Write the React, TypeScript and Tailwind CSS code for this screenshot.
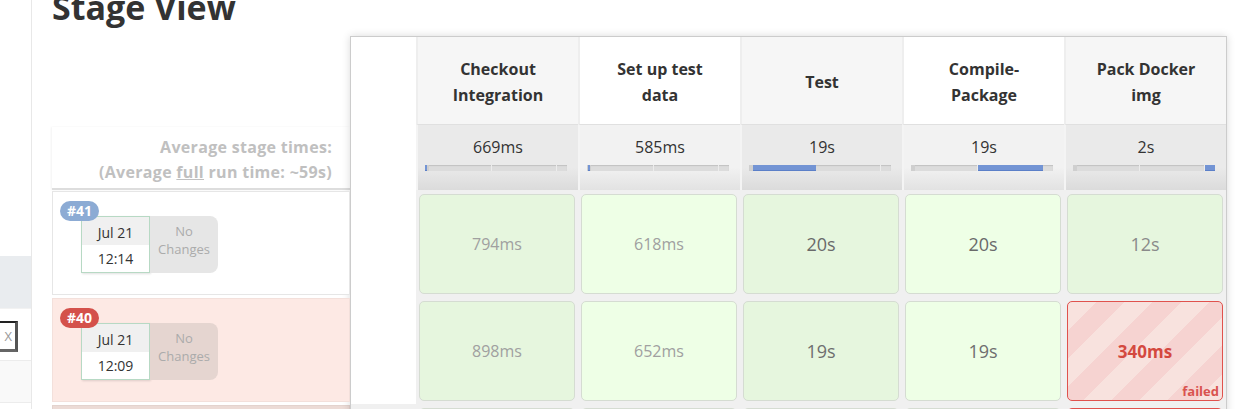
import React from "react";

type Stage = {
  name: string[];
  avg: string;
  blue: [number, number];
  odd: boolean;
};

const stages: Stage[] = [
  { name: ["Checkout", "Integration"], avg: "669ms", blue: [0, 2], odd: true },
  { name: ["Set up test", "data"], avg: "585ms", blue: [1, 3], odd: false },
  { name: ["Test"], avg: "19s", blue: [4, 67], odd: true },
  { name: ["Compile-", "Package"], avg: "19s", blue: [67, 132], odd: false },
  { name: ["Pack Docker", "img"], avg: "2s", blue: [132, 142], odd: true },
];

type Cell = { text: string; big: boolean; color: string; failed?: boolean };

const runs: Cell[][] = [
  [
    { text: "794ms", big: false, color: "text-[#a0a0a0]" },
    { text: "618ms", big: false, color: "text-[#a0a0a0]" },
    { text: "20s", big: true, color: "text-[#6a6a6a]" },
    { text: "20s", big: true, color: "text-[#6a6a6a]" },
    { text: "12s", big: true, color: "text-[#8a8a8a]" },
  ],
  [
    { text: "898ms", big: false, color: "text-[#a0a0a0]" },
    { text: "652ms", big: false, color: "text-[#a0a0a0]" },
    { text: "19s", big: true, color: "text-[#6e6e6e]" },
    { text: "19s", big: true, color: "text-[#6e6e6e]" },
    { text: "340ms", big: false, color: "", failed: true },
  ],
  [
    { text: "", big: false, color: "" },
    { text: "", big: false, color: "" },
    { text: "", big: false, color: "" },
    { text: "", big: false, color: "" },
    { text: "", big: false, color: "", failed: true },
  ],
];

function Sidebar() {
  return (
    <div className="w-[32px] shrink-0 border-r border-[#e8e8e8] flex flex-col">
      <div className="h-[256px]" />
      <div className="h-[52px] bg-[#e9ecef]" />
      <div className="h-[13px] border-t border-[#f2f2f2]" />
      <div className="h-[31px] w-[18px] border-t-2 border-r-[3px] border-b-[3px] border-t-[#222] border-r-[#555] border-b-[#666] bg-white flex items-center justify-end pr-[3px] text-[13px] text-[#9a9a9a] leading-none">
        X
      </div>
      <div className="h-[8px]" />
      <div className="h-[43px] bg-[#f9f9f9] border-y border-[#ececec]" />
    </div>
  );
}

function BuildRow({
  num,
  badge,
  box,
  changes,
  date,
  time,
}: {
  num: string;
  badge: string;
  box: string;
  changes: string;
  date: string;
  time: string;
}) {
  return (
    <div className="h-[107px] pt-[1px] pb-[2px]">
      <div className={"h-full border relative " + box}>
        <div
          className={
            "absolute left-[7px] top-[9px] z-10 w-[39px] h-[20px] rounded-full text-white font-bold text-[14px] leading-[20px] text-center " +
            badge
          }
        >
          {num}
        </div>
        <div className="flex ml-[28px] mt-[24px]">
          <div className="w-[69px] h-[57px] border border-[#b7d9c4] shadow-[1px_1px_2px_rgba(0,0,0,0.12)] flex flex-col text-[14px] text-[#333]">
            <div className="h-[28px] bg-[#f0f0f0] flex items-center justify-center pt-[2px]">
              {date}
            </div>
            <div className="flex-1 bg-white flex items-center justify-center">
              {time}
            </div>
          </div>
          <div
            className={
              "w-[68px] h-[57px] rounded-r-[8px] text-[#ababab] text-[13px] leading-[18px] flex flex-col items-center pt-[6px] " +
              changes
            }
          >
            <div>No</div>
            <div>Changes</div>
          </div>
        </div>
      </div>
    </div>
  );
}

function Bar({ blue }: { blue: [number, number] }) {
  return (
    <div className="ml-[7px] mt-[7px] w-[142px] h-[6px] bg-[#dcdcdc] relative shadow-[inset_0_1px_1px_rgba(0,0,0,0.12)]">
      <div className="absolute left-0 top-0 h-full w-[4px] bg-[#cfcfcf]" />
      <div className="absolute left-[66px] top-0 h-full w-[1px] bg-[#ececec]" />
      <div className="absolute left-[131px] top-0 h-full w-[1px] bg-[#ececec]" />
      <div
        className="absolute top-0 h-full bg-[#7394d4] border-b border-[#5b7fc8]"
        style={{ left: blue[0], width: Math.max(blue[1] - blue[0], 2) }}
      />
    </div>
  );
}

function StageCell({ cell, odd }: { cell: Cell; odd: boolean }) {
  if (cell.failed) {
    return (
      <div className="bg-[#f0f0f0] pt-[4px] pb-[3px] px-[3px]">
        <div className="h-full rounded-[5px] border border-[#e0524d] relative flex items-center justify-center bg-[repeating-linear-gradient(135deg,#f8e2de_0px,#f8e2de_20px,#f6d3d1_20px,#f6d3d1_40px)]">
          {cell.text && (
            <span className="font-bold text-[17px] text-[#d4493f] mt-[1px]">{cell.text}</span>
          )}
          {cell.text && (
            <span className="absolute right-[3px] bottom-[1px] text-[13px] font-bold text-[#d9534f] leading-[16px]">
              failed
            </span>
          )}
        </div>
      </div>
    );
  }
  return (
    <div className="bg-[#f0f0f0] pt-[4px] pb-[3px] px-[3px]">
      <div
        className={
          "h-full rounded-[5px] border border-[#d5dcd2] flex items-center justify-center " +
          (odd ? "bg-[#e6f6de]" : "bg-[#eeffe6]")
        }
      >
        {cell.text && (
          <span className={(cell.big ? "text-[18px] " : "text-[16px] ") + cell.color}>
            {cell.text}
          </span>
        )}
      </div>
    </div>
  );
}

export default function App() {
  return (
    <div className="w-[1244px] h-[409px] overflow-hidden bg-white flex font-['Open_Sans','Noto_Sans',sans-serif] text-[#333]">
      <Sidebar />
      <div className="flex-1 pl-[20px] flex flex-col">
        <h1 className="h-[36px] shrink-0 text-[34px] leading-[14px] font-bold text-[#333]">
          Stage View
        </h1>
        <div className="flex items-start">
          <div className="w-[298px] shrink-0 flex flex-col">
            <div className="h-[91px]" />
            <div className="h-[63px] bg-white border-b-2 border-[#dddddd] shadow-[-1px_0_2px_rgba(0,0,0,0.05)] flex flex-col items-end pr-[18px] pt-[8px] text-[16px] font-bold text-[#c0c0c0] leading-[25px] tracking-[0.3px]">
              <div>Average stage times:</div>
              <div>
                (Average <span className="underline">full</span> run time: ~59s)
              </div>
            </div>
            <BuildRow
              num="#41"
              badge="bg-[#8cabd4]"
              box="bg-white border-[#e6e6e6]"
              changes="bg-[#e6e6e6]"
              date="Jul 21"
              time="12:14"
            />
            <BuildRow
              num="#40"
              badge="bg-[#d4514b]"
              box="bg-[#fde9e4] border-[#f3e0db]"
              changes="bg-[#e5d5d0]"
              date="Jul 21"
              time="12:09"
            />
            <div className="h-[107px] pt-[1px] pb-[2px]">
              <div className="h-full border bg-[#ecdbd6] border-[#e3d3ce]" />
            </div>
          </div>
          <div className="w-[877px] shrink-0 border border-[#cccccc] shadow-[0_0_8px_rgba(0,0,0,0.15)] flex flex-col bg-white">
            <div className="grid grid-cols-[65px_repeat(5,162px)] h-[87px]">
              <div className="bg-white" />
              {stages.map((s, i) => (
                <div
                  key={i}
                  className={
                    "border-l-2 border-[#eeeeee] flex flex-col items-center justify-center pt-[3px] text-center font-bold text-[16px] leading-[26px] text-[#333] " +
                    (s.odd ? "bg-[#f6f6f6]" : "bg-white")
                  }
                >
                  {s.name.map((l, j) => (
                    <div key={j}>{l}</div>
                  ))}
                </div>
              ))}
            </div>
            <div className="grid grid-cols-[65px_repeat(5,162px)] h-[66px]">
              <div className="bg-white" />
              {stages.map((s, i) => (
                <div
                  key={i}
                  className={
                    "border-l-2 border-[#f4f4f4] border-t border-t-[#e0e0e0] flex flex-col pt-[11px] " +
                    (s.odd
                      ? "bg-[linear-gradient(to_bottom,#eaeaea_65%,#dbdbdb)]"
                      : "bg-[linear-gradient(to_bottom,#f2f2f2_65%,#e2e2e2)]")
                  }
                >
                  <div className="text-center text-[16px] leading-[22px] text-[#333]">{s.avg}</div>
                  <Bar blue={s.blue} />
                </div>
              ))}
            </div>
            {runs.map((row, r) => (
              <div key={r} className="grid grid-cols-[65px_repeat(5,162px)] h-[107px]">
                <div className={r === 2 ? "bg-[#f0f0f0]" : "bg-white"} />
                {row.map((c, i) => (
                  <StageCell key={i} cell={c} odd={stages[i].odd} />
                ))}
              </div>
            ))}
          </div>
        </div>
      </div>
    </div>
  );
}
